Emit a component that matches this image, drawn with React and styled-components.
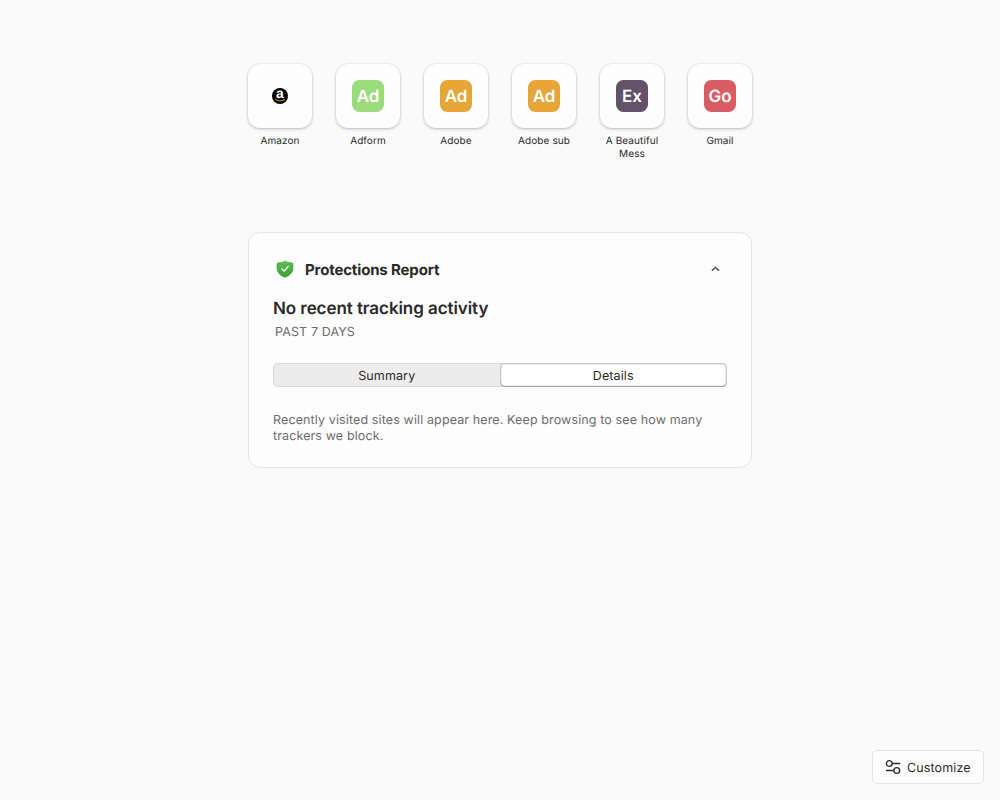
import React from "react";
import styled, { createGlobalStyle } from "styled-components";

const GlobalStyle = createGlobalStyle`
  * { box-sizing: border-box; }
  body {
    margin: 0;
    background: #fafafa;
    color: #2a2a2a;
    font-family: Inter, "Liberation Sans", sans-serif;
    font-size: 12.5px;
    letter-spacing: 0.12px;
    text-rendering: geometricPrecision;
  }
  button { font: inherit; letter-spacing: inherit; text-rendering: inherit; color: inherit; border: 0; padding: 0; background: none; }
  h2, h3, p { margin: 0; }
`;

const Page = styled.div`
  height: 800px;
  padding: 64px 16px 16px;
  display: flex;
  flex-direction: column;
  align-items: center;
`;

const Favorites = styled.nav`
  width: 504px;
  height: 168px;
  flex: none;
  display: flex;
  justify-content: space-between;
`;

const Favorite = styled.div`
  width: 64px;
  display: flex;
  flex-direction: column;
  align-items: center;
`;

const Tile = styled.div`
  width: 64px;
  height: 64px;
  border-radius: 12px;
  background: #fdfdfd;
  box-shadow: 0 0 0 0.5px rgba(0, 0, 0, 0.05), 0 1px 3px rgba(0, 0, 0, 0.25);
  display: flex;
  align-items: center;
  justify-content: center;
`;

const Monogram = styled.div`
  width: 32px;
  height: 32px;
  padding-top: 1px;
  border-radius: 7.5px;
  background: ${(p) => p.$color};
  color: #fff;
  font-size: 17px;
  font-weight: 600;
  letter-spacing: 0;
  line-height: 32px;
  text-align: center;
`;

const Label = styled.div`
  margin-top: 7px;
  font-size: 10px;
  line-height: 13px;
  letter-spacing: 0.1px;
  text-align: center;
`;

const Card = styled.section`
  width: 504px;
  height: 236px;
  flex: none;
  padding: 24px;
  border: 1px solid #e4e4e4;
  border-radius: 12px;
  background: #fdfdfd;
`;

const CardHeader = styled.header`
  display: flex;
  align-items: center;
  height: 24px;
  padding: 0 7px 0 3px;
`;

const CardTitle = styled.h3`
  flex: 1;
  margin-left: 11px;
  padding-top: 2px;
  font-size: 15px;
  font-weight: 700;
  letter-spacing: -0.15px;
  line-height: 22px;
`;

const Headline = styled.h2`
  margin-top: 17px;
  font-size: 17px;
  font-weight: 600;
  letter-spacing: -0.07px;
  line-height: 22px;
`;

const Period = styled.p`
  margin: 5px 0 0 2px;
  color: #6c6c6c;
  line-height: 16px;
`;

const Segments = styled.div`
  display: flex;
  height: 24px;
  margin-top: 22px;
  border-radius: 5px;
  background: #ececec;
  box-shadow: inset 0 0 0 1px #d8d8d8;
`;

const Segment = styled.button`
  flex: 1;
  height: 24px;
  padding-top: 2px;
  line-height: 24px;
  border-radius: 5px;
  margin-left: ${(p) => (p.$active ? "-1px" : "0")};
  background: ${(p) => (p.$active ? "#fff" : "transparent")};
  box-shadow: ${(p) =>
    p.$active ? "inset 0 -1px 0 #a4a4a4, inset 0 0 0 1px #c8c8c8, inset 0 0 0 1.5px #e0e0e0" : "none"};
`;

const Message = styled.p`
  margin-top: 26px;
  color: #6c6c6c;
  line-height: 16px;
`;

const Footer = styled.footer`
  align-self: flex-end;
  margin-top: auto;
`;

const CustomizeButton = styled.button`
  && {
    display: flex;
    align-items: center;
    gap: 6px;
    width: 112px;
    height: 34px;
    padding: 0 12px;
    border: 1px solid #e4e4e4;
    border-radius: 5px;
    background: #fdfdfd;
  }
`;

const ButtonText = styled.span`
  padding-top: 3px;
  line-height: 17px;
`;

const AmazonSvg = styled.svg`
  display: block;
  overflow: visible;
`;

const AmazonIcon = () => (
  <AmazonSvg width="16" height="16" viewBox="0 0 16 16">
    <circle cx="8" cy="8" r="8" fill="#000" />
    <text x="8" y="10.3" textAnchor="middle" fill="#fff" fontFamily="Liberation Sans, sans-serif" fontWeight="700" fontSize="14" letterSpacing="0">a</text>
    <path d="M3 11.5Q8 14.4 12.1 11.9" fill="none" stroke="#f39112" strokeWidth="1" />
    <path d="M11.1 11.5L12.8 11.3L12.3 12.9" fill="none" stroke="#f39112" strokeWidth="0.6" />
  </AmazonSvg>
);

const ShieldIcon = () => (
  <svg width="18" height="18" viewBox="0 0 18 18">
    <defs>
      <linearGradient id="shield" x1="0" y1="0" x2="0" y2="1">
        <stop offset="0" stopColor="#61bf55" />
        <stop offset="1" stopColor="#3c9d33" />
      </linearGradient>
    </defs>
    <path
      d="M9 1C7.4 2.4 4.6 2.9 2 2.9Q1.1 3 1.1 3.9V8.2C1.1 13 4.9 15.9 9 17.2C13.1 15.9 16.9 13 16.9 8.2V3.9Q16.9 3 16 2.9C13.4 2.9 10.6 2.4 9 1Z"
      fill="url(#shield)" stroke="#3b9934" strokeWidth="0.7"
    />
    <path d="M5.9 9L8.1 11.1L12.1 6.6" fill="none" stroke="#fff" strokeWidth="1.4" strokeLinecap="round" strokeLinejoin="round" />
  </svg>
);

const ChevronIcon = () => (
  <svg width="9" height="6" viewBox="0 0 9 6">
    <path d="M.8 4.6L4.5 1.5L8.2 4.6" fill="none" stroke="#505050" strokeWidth="1.4" />
  </svg>
);

const SlidersIcon = () => (
  <svg width="16" height="16" viewBox="0 0 16 16" fill="none" stroke="#2e2e2e" strokeWidth="1.4">
    <circle cx="4.3" cy="4.5" r="2.9" />
    <path d="M7.2 4.5H15.2M1 11.5H8.7" />
    <circle cx="11.8" cy="11.5" r="2.9" />
  </svg>
);

const favorites = [
  { label: "Amazon" },
  { label: "Adform", mono: "Ad", color: "#9adc7c" },
  { label: "Adobe", mono: "Ad", color: "#e7a537" },
  { label: "Adobe sub", mono: "Ad", color: "#e7a537" },
  { label: "A Beautiful Mess", mono: "Ex", color: "#635268" },
  { label: "Gmail", mono: "Go", color: "#d85c62" },
];

export default function App() {
  return (
    <>
      <GlobalStyle />
      <Page>
        <Favorites>
          {favorites.map((f) => (
            <Favorite key={f.label}>
              <Tile>
                {f.mono ? <Monogram $color={f.color}>{f.mono}</Monogram> : <AmazonIcon />}
              </Tile>
              <Label>{f.label}</Label>
            </Favorite>
          ))}
        </Favorites>
        <Card>
          <CardHeader>
            <ShieldIcon />
            <CardTitle>Protections Report</CardTitle>
            <ChevronIcon />
          </CardHeader>
          <Headline>No recent tracking activity</Headline>
          <Period>PAST 7 DAYS</Period>
          <Segments>
            <Segment>Summary</Segment>
            <Segment $active>Details</Segment>
          </Segments>
          <Message>
            Recently visited sites will appear here. Keep browsing to see how many trackers we block.
          </Message>
        </Card>
        <Footer>
          <CustomizeButton>
            <SlidersIcon />
            <ButtonText>Customize</ButtonText>
          </CustomizeButton>
        </Footer>
      </Page>
    </>
  );
}
